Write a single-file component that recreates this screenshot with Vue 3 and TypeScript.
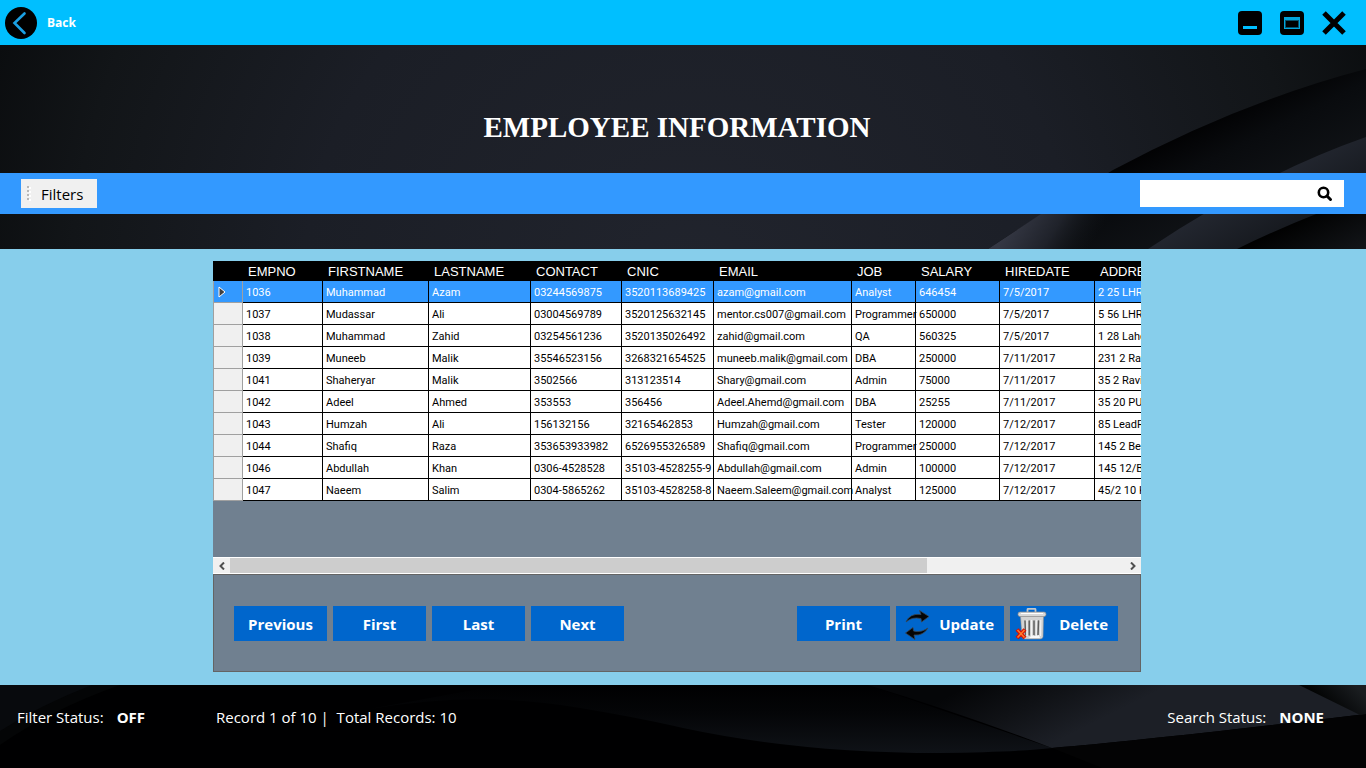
<script setup lang="ts">
import { ref } from 'vue'

interface Column {
  name: string
  width: number
}

const columns: Column[] = [
  { name: 'EMPNO', width: 80 },
  { name: 'FIRSTNAME', width: 106 },
  { name: 'LASTNAME', width: 102 },
  { name: 'CONTACT', width: 91 },
  { name: 'CNIC', width: 92 },
  { name: 'EMAIL', width: 138 },
  { name: 'JOB', width: 64 },
  { name: 'SALARY', width: 84 },
  { name: 'HIREDATE', width: 95 },
  { name: 'ADDRESS', width: 110 },
]

const rows: string[][] = [
  ['1036', 'Muhammad', 'Azam', '03244569875', '3520113689425', 'azam@gmail.com', 'Analyst', '646454', '7/5/2017', '2 25 LHR'],
  ['1037', 'Mudassar', 'Ali', '03004569789', '3520125632145', 'mentor.cs007@gmail.com', 'Programmer', '650000', '7/5/2017', '5 56 LHR'],
  ['1038', 'Muhammad', 'Zahid', '03254561236', '3520135026492', 'zahid@gmail.com', 'QA', '560325', '7/5/2017', '1 28 Lahore'],
  ['1039', 'Muneeb', 'Malik', '35546523156', '3268321654525', 'muneeb.malik@gmail.com', 'DBA', '250000', '7/11/2017', '231 2 Ravi'],
  ['1041', 'Shaheryar', 'Malik', '3502566', '313123514', 'Shary@gmail.com', 'Admin', '75000', '7/11/2017', '35 2 Ravi'],
  ['1042', 'Adeel', 'Ahmed', '353553', '356456', 'Adeel.Ahemd@gmail.com', 'DBA', '25255', '7/11/2017', '35 20 PU'],
  ['1043', 'Humzah', 'Ali', '156132156', '32165462853', 'Humzah@gmail.com', 'Tester', '120000', '7/12/2017', '85 LeadR'],
  ['1044', 'Shafiq', 'Raza', '353653933982', '6526955326589', 'Shafiq@gmail.com', 'Programmer', '250000', '7/12/2017', '145 2 Bed'],
  ['1046', 'Abdullah', 'Khan', '0306-4528528', '35103-4528255-9', 'Abdullah@gmail.com', 'Admin', '100000', '7/12/2017', '145 12/B'],
  ['1047', 'Naeem', 'Salim', '0304-5865262', '35103-4528258-8', 'Naeem.Saleem@gmail.com', 'Analyst', '125000', '7/12/2017', '45/2 10 K'],
]

const selected = ref(0)
const search = ref('')

function goTo(index: number): void {
  selected.value = Math.min(rows.length - 1, Math.max(0, index))
}
</script>

<template>
  <div class="window">
    <svg class="backdrop" viewBox="0 0 1366 768" preserveAspectRatio="none" aria-hidden="true">
      <defs>
        <radialGradient id="glow" gradientUnits="userSpaceOnUse" cx="690" cy="290" r="860">
          <stop offset="0" stop-color="#21242d" />
          <stop offset="0.45" stop-color="#1b1e26" />
          <stop offset="0.72" stop-color="#121518" />
          <stop offset="1" stop-color="#030405" />
        </radialGradient>
        <linearGradient id="fold" gradientUnits="userSpaceOnUse" x1="1180" y1="130" x2="1240" y2="250">
          <stop offset="0" stop-color="#010102" />
          <stop offset="0.3" stop-color="#090b0e" />
          <stop offset="1" stop-color="#14171b" />
        </linearGradient>
        <linearGradient id="sheen" gradientUnits="userSpaceOnUse" x1="1010" y1="228" x2="1075" y2="270">
          <stop offset="0" stop-color="#343743" />
          <stop offset="0.5" stop-color="#1f222a" />
          <stop offset="1" stop-color="#14171b" stop-opacity="0" />
        </linearGradient>
        <linearGradient id="band" gradientUnits="userSpaceOnUse" x1="1230" y1="180" x2="1270" y2="250">
          <stop offset="0" stop-color="#262a34" />
          <stop offset="1" stop-color="#14171c" />
        </linearGradient>
        <linearGradient id="deep" gradientUnits="userSpaceOnUse" x1="1270" y1="230" x2="1300" y2="290">
          <stop offset="0" stop-color="#000000" />
          <stop offset="1" stop-color="#15181c" />
        </linearGradient>
        <linearGradient id="wave" gradientUnits="userSpaceOnUse" x1="0" y1="685" x2="0" y2="753">
          <stop offset="0" stop-color="#000001" />
          <stop offset="0.4" stop-color="#040507" />
          <stop offset="1" stop-color="#0f1217" />
        </linearGradient>
        <linearGradient id="wing" gradientUnits="userSpaceOnUse" x1="1000" y1="670" x2="1040" y2="750">
          <stop offset="0" stop-color="#050608" />
          <stop offset="0.5" stop-color="#101216" />
          <stop offset="1" stop-color="#1c1f26" />
        </linearGradient>
        <linearGradient id="corner" gradientUnits="userSpaceOnUse" x1="1325" y1="705" x2="1350" y2="680">
          <stop offset="0" stop-color="#020303" />
          <stop offset="1" stop-color="#1a1d20" />
        </linearGradient>
      </defs>
      <rect width="1366" height="768" fill="url(#glow)" />
      <path d="M1366 69Q1240 102 1113 170Q1050 208 988 249H1366Z" fill="url(#fold)" />
      <path d="M1041 214L988 249H1148L1203 214Z" fill="url(#sheen)" />
      <path d="M1366 137Q1260 174 1148 249H1366Z" fill="url(#band)" />
      <path d="M1366 196Q1300 218 1237 249H1366Z" fill="url(#deep)" />
      <rect y="685" width="1366" height="83" fill="#000001" />
      <path d="M0 685H120Q50 710 0 745Z" fill="#040506" />
      <path d="M0 685H92Q40 705 0 731Z" fill="#080a0d" />
      <path d="M370 709Q480 690 580 708Q640 718 683 728Q800 753 940 753Q1020 752 1052 748L868 685H500Z" fill="url(#wave)" />
      <path d="M868 685Q960 713 1052 748Q1150 740 1366 714V685Z" fill="url(#wing)" />
      <path d="M1052 748Q1150 740 1366 714V768H1102Z" fill="#030304" />
      <path d="M1299 685L1360 715L1366 714V685Z" fill="url(#corner)" />
    </svg>

    <header class="titlebar">
      <button class="back" type="button">
        <svg width="32" height="32" viewBox="0 0 32 32" aria-hidden="true">
          <circle cx="16" cy="16" r="16" fill="#000" />
          <path d="M19.500 6.500L9.500 16L19.500 26" fill="none" stroke="#1ba0e2" stroke-width="2.600" stroke-linecap="round" />
        </svg>
        <span>Back</span>
      </button>
      <div class="controls">
        <button type="button" aria-label="Minimize">
          <svg width="24" height="24" viewBox="0 0 24 24">
            <rect width="24" height="24" rx="4" />
            <rect x="5" y="15" width="14" height="3" fill="#00bfff" />
          </svg>
        </button>
        <button type="button" aria-label="Maximize">
          <svg width="24" height="24" viewBox="0 0 24 24">
            <rect width="24" height="24" rx="4" />
            <rect x="4" y="6" width="16" height="12" fill="#00a5dc" />
            <rect x="5" y="7" width="14" height="10" fill="#06506b" />
            <path d="M5 8H19" stroke="#00a5dc" stroke-width="2" />
            <rect x="6" y="10" width="12" height="6" fill="#000" />
          </svg>
        </button>
        <button type="button" aria-label="Close">
          <svg width="24" height="24" viewBox="0 0 24 24">
            <path d="M2 2L22 22M22 2L2 22" stroke="#000" stroke-width="5" />
          </svg>
        </button>
      </div>
    </header>

    <h1 class="title">EMPLOYEE INFORMATION</h1>

    <div class="toolbar">
      <button class="filters" type="button">
        <svg width="4" height="16" viewBox="0 0 4 16" aria-hidden="true">
          <path d="M2 0V15" stroke="#fff" stroke-width="2" stroke-dasharray="2 2" transform="translate(1 1)" />
          <path d="M1 0V16" stroke="#b8b8b8" stroke-width="2" stroke-dasharray="2 2" />
        </svg>
        <span>Filters</span>
      </button>
      <label class="search">
        <input v-model="search" type="text" aria-label="Search" />
        <svg width="16" height="16" viewBox="0 0 16 16" aria-hidden="true">
          <circle cx="6.500" cy="6.500" r="4.700" fill="none" stroke="#000" stroke-width="2.600" />
          <path d="M10 10L13.500 13.500" stroke="#000" stroke-width="3" stroke-linecap="round" />
        </svg>
      </label>
    </div>

    <main class="content">
      <div class="grid">
        <table>
          <colgroup>
            <col class="marker-col" />
            <col v-for="c in columns" :key="c.name" :style="{ width: c.width + 'px' }" />
          </colgroup>
          <thead>
            <tr>
              <th></th>
              <th v-for="c in columns" :key="c.name" scope="col">{{ c.name }}</th>
            </tr>
          </thead>
          <tbody>
            <tr v-for="(r, i) in rows" :key="r[0]" :class="{ active: i === selected }" @click="goTo(i)">
              <td class="marker">
                <svg v-if="i === selected" width="8" height="12" viewBox="0 0 8 12" aria-hidden="true">
                  <path d="M1 1L7 6L1 11Z" fill="#404040" stroke="#fff" />
                </svg>
              </td>
              <td v-for="(v, j) in r" :key="j">{{ v }}</td>
            </tr>
          </tbody>
        </table>
      </div>
      <div class="scrollbar">
        <button type="button" aria-label="Scroll left">
          <svg width="6" height="8" viewBox="0 0 6 8"><path d="M5 0.500L1.500 4L5 7.500" /></svg>
        </button>
        <div class="track"><div class="thumb"></div></div>
        <button type="button" aria-label="Scroll right">
          <svg width="6" height="8" viewBox="0 0 6 8"><path d="M1 0.500L4.500 4L1 7.500" /></svg>
        </button>
      </div>
      <div class="actions">
        <div class="group">
          <button type="button" @click="goTo(selected - 1)">Previous</button>
          <button type="button" @click="goTo(0)">First</button>
          <button type="button" @click="goTo(rows.length - 1)">Last</button>
          <button type="button" @click="goTo(selected + 1)">Next</button>
        </div>
        <div class="group">
          <button type="button">Print</button>
          <button class="wide" type="button">
            <svg width="32" height="32" viewBox="0 0 32 32" aria-hidden="true">
              <g fill="#050505" stroke="#3a4653" stroke-width="0.800" stroke-linejoin="round">
                <path d="M5 14Q9 5 20 6.500L18.500 2.500L28 8.500L20.500 14L20 10.500Q11 8.500 5 14Z" />
                <path d="M27 20Q22 28 13 27L14 31.500L4.500 25L12 19.500L12.500 23Q20 25 27 20Z" />
              </g>
            </svg>
            <span>Update</span>
          </button>
          <button class="wide" type="button">
            <svg width="32" height="32" viewBox="0 0 32 32" aria-hidden="true">
              <path d="M12.500 4V1.500Q12.500 0.800 13.500 0.800H19.500Q20.500 0.800 20.500 1.500V4" fill="none" stroke="#c8c8c8" stroke-width="1.800" />
              <path d="M5.500 8H28.500L28 29Q27.500 31 25 31H10Q7.500 31 7 29Z" fill="#d3d3d3" stroke="#929292" stroke-width="0.600" />
              <path d="M10 13L10.500 27M14.200 13V27M19 13V27M23.500 13L23 27" stroke="#5e5e5e" stroke-width="1.500" stroke-linecap="round" />
              <path d="M12 12V28M16.500 12V28M21.300 12V28M25.800 12L25.500 28" stroke="#f5f5f5" />
              <path d="M15 29Q18 26 20 28L24 27L25 30H14Z" fill="#fafafa" />
              <rect x="3" y="4" width="28" height="4.500" rx="2" fill="#d9d9d9" stroke="#8d8d8d" stroke-width="0.700" />
              <path d="M6 5.500H28" stroke="#fff" />
              <path d="M2 21.500L10 30M10 21.500L2 30" stroke="#d80f00" stroke-width="4" />
              <path d="M2.500 22L9.500 29.500M9.500 22L2.500 29.500" stroke="#ff7a2a" stroke-width="1.600" />
            </svg>
            <span>Delete</span>
          </button>
        </div>
      </div>
    </main>

    <footer class="status">
      <p class="pair">Filter Status:<strong>OFF</strong></p>
      <p>Record {{ selected + 1 }} of 10 |&nbsp; Total Records: 10</p>
      <p class="pair">Search Status:<strong>NONE</strong></p>
    </footer>
  </div>
</template>

<style>
html,
body {
  background: #000;
}
</style>

<style scoped>
.window {
  position: relative;
  isolation: isolate;
  display: flex;
  flex-direction: column;
  min-height: 100vh;
  overflow: hidden;
  color: #fff;
  font-family: 'Open Sans', 'Noto Sans', sans-serif;
  font-size: 15px;
}
* {
  box-sizing: border-box;
}
button {
  border: 0;
  padding: 0;
  font: inherit;
  color: inherit;
  background: none;
  cursor: pointer;
}
svg {
  display: block;
  flex: none;
}
.backdrop {
  position: absolute;
  inset: 0;
  z-index: -1;
  width: 100%;
  height: 100%;
}
.titlebar {
  display: flex;
  align-items: center;
  justify-content: space-between;
  height: 45px;
  padding: 0 20px 0 5px;
  background: #00bfff;
}
.back {
  display: flex;
  align-items: center;
  gap: 10px;
  font-size: 12px;
  font-weight: 700;
}
.controls {
  display: flex;
  gap: 18px;
}
.title {
  display: flex;
  align-items: center;
  justify-content: center;
  height: 128px;
  margin: 0;
  padding: 36px 225px 0 213px;
  font-family: 'Liberation Serif', serif;
  font-size: 29px;
  font-weight: 700;
}
.toolbar {
  display: flex;
  align-items: center;
  justify-content: space-between;
  height: 41px;
  margin-bottom: 35px;
  padding: 0 22px 0 21px;
  background: #3399ff;
}
.filters {
  display: flex;
  align-items: center;
  gap: 10px;
  width: 76px;
  height: 29px;
  padding-left: 6px;
  background: #f0f0f0;
  color: #000;
}
.search {
  display: flex;
  align-items: center;
  width: 204px;
  height: 27px;
  padding-right: 11px;
  background: #fff;
}
.search input {
  flex: 1;
  min-width: 0;
  height: 100%;
  border: 0;
  padding: 0 6px;
  outline: 0;
  font: inherit;
  background: none;
}
.content {
  display: flex;
  flex-direction: column;
  padding: 12px 225px 13px 213px;
  background: #87ceeb;
}
.grid {
  height: 296px;
  overflow: hidden;
  background: #708090;
}
table {
  width: 992px;
  table-layout: fixed;
  border-collapse: separate;
  border-spacing: 0;
  font-family: Roboto, 'Liberation Sans', sans-serif;
  font-size: 11px;
  color: #000;
}
.marker-col {
  width: 30px;
}
th {
  height: 20px;
  padding: 2px 0 0 5px;
  background: #000;
  color: #fff;
  font-family: 'Liberation Sans', sans-serif;
  font-size: 13px;
  font-weight: 400;
  line-height: 18px;
  text-align: left;
}
td {
  height: 22px;
  padding: 2px 0 0 3px;
  border-right: 1px solid #000;
  border-bottom: 1px solid #000;
  background: #fff;
  line-height: 19px;
  white-space: nowrap;
}
.marker {
  padding: 0 0 0 4px;
  border-left: 1px solid #a0a0a0;
  border-right-color: #a0a0a0;
  border-bottom-color: #a0a0a0;
  background: #f0f0f0;
}
.active td {
  background: #3399ff;
  color: #fff;
}
.scrollbar {
  display: flex;
  height: 17px;
  border-top: 1px solid #fff;
  border-bottom: 1px solid #fff;
  background: #f0f0f0;
}
.scrollbar button {
  display: flex;
  align-items: center;
  justify-content: center;
  width: 17px;
}
.scrollbar path {
  fill: none;
  stroke: #505050;
  stroke-width: 2;
}
.track {
  flex: 1;
}
.thumb {
  width: 78%;
  height: 100%;
  background: #cdcdcd;
}
.actions {
  display: flex;
  align-items: center;
  justify-content: space-between;
  height: 98px;
  padding: 0 22px 0 20px;
  border: 1px solid #646464;
  background: #708090;
}
.group {
  display: flex;
  gap: 6px;
}
.group button {
  width: 93px;
  height: 35px;
  padding-top: 1px;
  background: #0066cc;
  font-weight: 700;
}
.group .wide {
  display: flex;
  align-items: center;
  justify-content: space-between;
  width: 108px;
  padding: 1px 10px 0 5px;
}
.status {
  display: grid;
  grid-template-columns: 199px 1fr auto;
  align-items: start;
  padding: 20px 42px 0 17px;
}
.status p {
  margin: 0;
  line-height: 24px;
  white-space: nowrap;
}
.status .pair {
  display: flex;
  gap: 13px;
}
</style>
